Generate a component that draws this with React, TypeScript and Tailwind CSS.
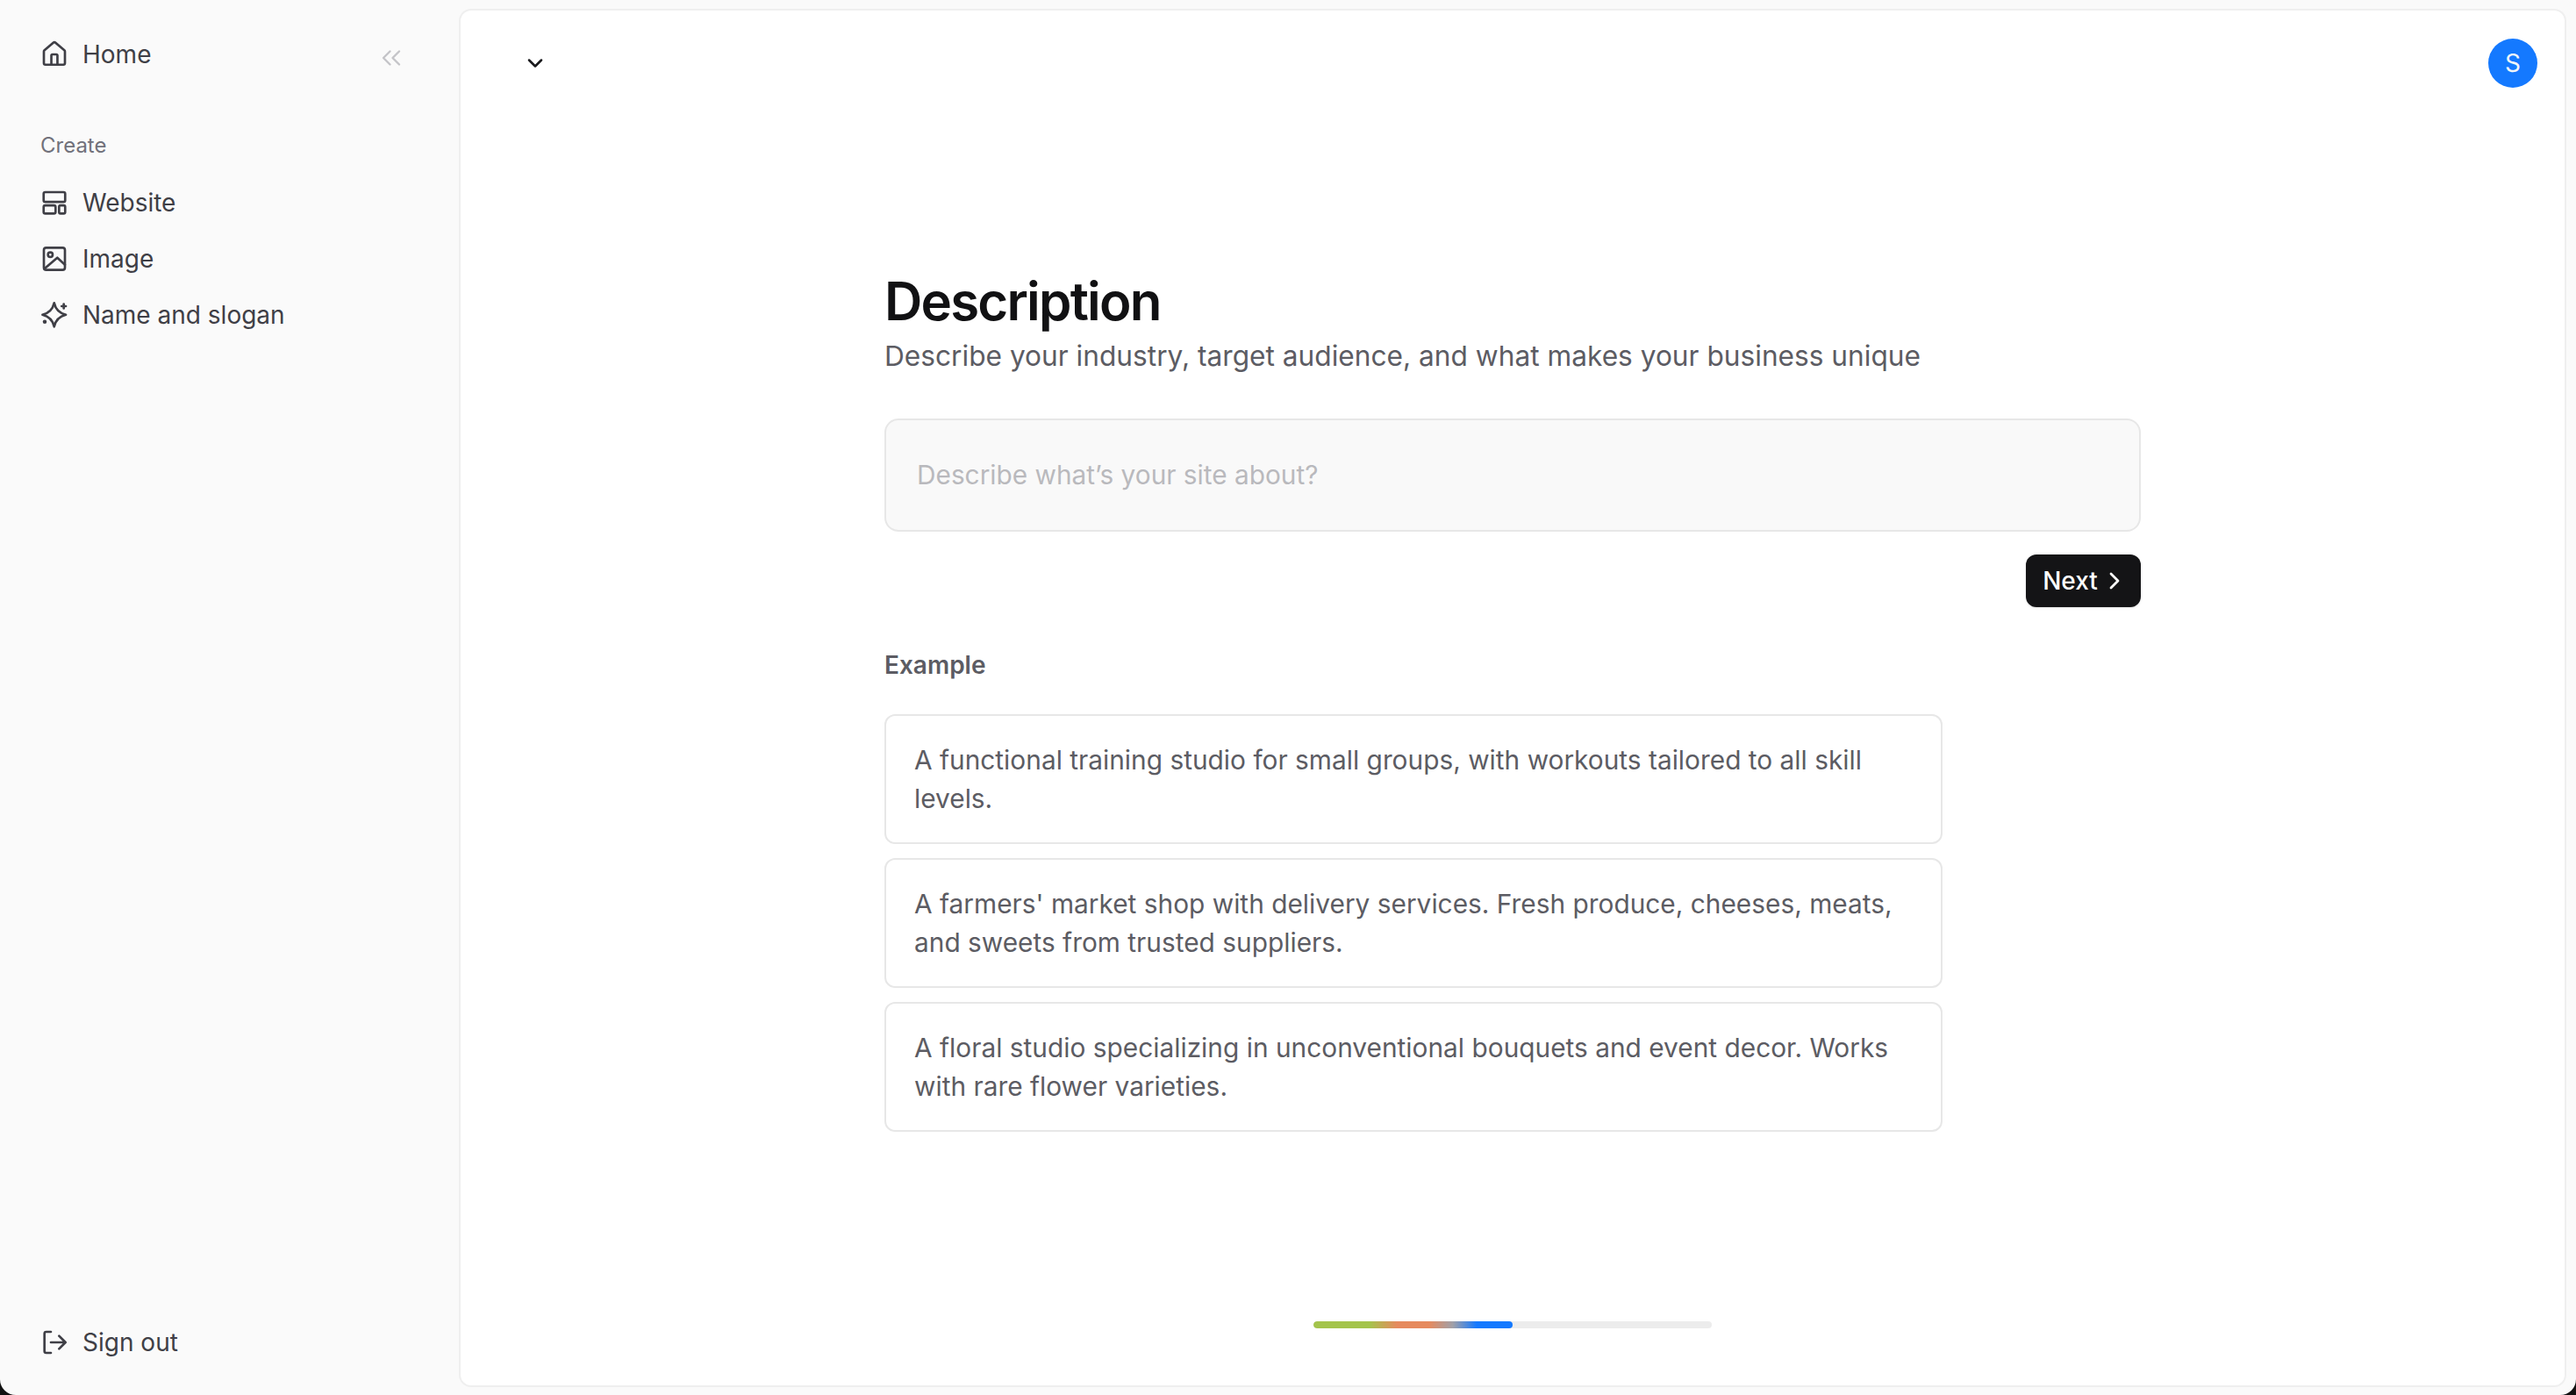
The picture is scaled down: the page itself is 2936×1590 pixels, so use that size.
import { ChevronDown, ChevronRight, ChevronsLeft } from "lucide-react";
import type { ReactNode } from "react";

const iconProps = {
  width: 32,
  height: 32,
  viewBox: "0 0 24 24",
  fill: "none",
  stroke: "currentColor",
  strokeWidth: 2,
  strokeLinecap: "round" as const,
  strokeLinejoin: "round" as const,
};

const HomeIcon = () => (
  <svg {...iconProps}>
    <path d="M3 19.5V9.6a1.5 1.5 0 0 1 .5-1.1L11 2a1.5 1.5 0 0 1 2 0l7.5 6.5a1.5 1.5 0 0 1 .5 1.1v9.9a1.3 1.3 0 0 1-1.3 1.3H4.3A1.3 1.3 0 0 1 3 19.5z" />
    <path d="M9.4 20.8V13a1 1 0 0 1 1-1h3.2a1 1 0 0 1 1 1v7.8" />
  </svg>
);

const WebsiteIcon = () => (
  <svg {...iconProps}>
    <rect x="2.8" y="3" width="18.4" height="8.3" rx="1.4" />
    <rect x="2.8" y="14.3" width="10.2" height="7" rx="1.4" />
    <rect x="16" y="14.3" width="5.2" height="7" rx="1.2" />
  </svg>
);

const ImageIcon = () => (
  <svg {...iconProps}>
    <rect x="3" y="2.5" width="18" height="19" rx="2" />
    <circle cx="8.5" cy="8.5" r="2" />
    <path d="M3.5 20.5 14.5 11l6.5 6" />
  </svg>
);

const SparkleIcon = () => (
  <svg {...iconProps}>
    <path d="M11.8 1.7C13 7.2 16 10.4 21.8 11.8 16 13.2 13 16.4 11.8 22 10.6 16.4 7.6 13.2 1.8 11.8 7.6 10.4 10.6 7.2 11.8 1.7z" />
    <path d="M20 2.7v3.6M18.2 4.5h3.6" />
    <circle cx="3.75" cy="17.8" r="1.7" fill="currentColor" stroke="none" />
  </svg>
);

const SignOutIcon = () => (
  <svg {...iconProps}>
    <path d="M9 3H5a1.5 1.5 0 0 0-1.5 1.5v15A1.5 1.5 0 0 0 5 21h4" />
    <path d="M9 12h12M16 6.5l5.5 5.5-5.5 5.5" />
  </svg>
);

function NavItem({ icon, label }: { icon: ReactNode; label: string }) {
  return (
    <div className="flex h-[64px] items-center gap-[16px] pl-[46px] text-[28px] leading-[40px] text-[#3f3f46]">
      {icon}
      <span>{label}</span>
    </div>
  );
}

const examples = [
  "A functional training studio for small groups, with workouts tailored to all skill levels.",
  "A farmers' market shop with delivery services. Fresh produce, cheeses, meats, and sweets from trusted suppliers.",
  "A floral studio specializing in unconventional bouquets and event decor. Works with rare flower varieties.",
];

export default function App() {
  return (
    <div className="h-[1590px] w-[2936px] overflow-hidden bg-[#111111]">
      <div className="flex h-full w-full overflow-hidden rounded-b-[18px] bg-[#fafafa] font-['Inter',sans-serif]">
        <aside className="flex w-[523px] shrink-0 flex-col pt-[30px] pb-[28px]">
          <div className="relative">
            <NavItem icon={<HomeIcon />} label="Home" />
            <ChevronsLeft
              className="absolute top-[18px] left-[428px] text-[#c4c4c8]"
              size={36}
              strokeWidth={1.6}
            />
          </div>
          <div className="mt-[56px] pl-[46px] text-[24px] leading-[32px] text-[#71717a]">Create</div>
          <div className="mt-[17px] flex flex-col">
            <NavItem icon={<WebsiteIcon />} label="Website" />
            <NavItem icon={<ImageIcon />} label="Image" />
            <NavItem icon={<SparkleIcon />} label="Name and slogan" />
          </div>
          <div className="mt-auto">
            <NavItem icon={<SignOutIcon />} label="Sign out" />
          </div>
        </aside>

        <main className="mt-[10px] mr-[11px] mb-[9px] flex min-w-0 flex-1 flex-col rounded-[14px] border-2 border-[#efefef] bg-white">
          <div className="flex h-[106px] items-start justify-between pt-[44px] pr-[31px] pl-[71px]">
            <ChevronDown className="mt-[2px] text-[#18181b]" size={28} strokeWidth={2.2} />
            <div className="-mt-[12px] flex h-[56px] w-[56px] items-center justify-center rounded-full bg-[#1479ff] text-[28px] text-[#f1f5f9]">
              S
            </div>
          </div>

          <div className="mx-auto flex w-[1432px] flex-1 flex-col pt-[189px]">
            <h1 className="text-[60px] leading-[72px] font-semibold tracking-[-0.03em] text-[#111113]">
              Description
            </h1>
            <p className="mt-[7px] text-[31.66px] leading-[40px] text-[#5c5c63]">
              Describe your industry, target audience, and what makes your business unique
            </p>
            <div className="mt-[51px] flex h-[129px] items-center rounded-[16px] border-2 border-[#e7e7e7] bg-[#f9f9f9] px-[35px] text-[29.8px] text-[#b9b9bd]">
              Describe what’s your site about?
            </div>
            <div className="mt-[26px] flex justify-end">
              <button className="flex h-[60px] w-[131px] items-center justify-center gap-[3px] rounded-[12px] bg-[#141416] pl-[5px] text-[28px] font-medium text-white shadow-sm">
                Next
                <ChevronRight size={32} strokeWidth={2.1} />
              </button>
            </div>
            <div className="mt-[50px] text-[28px] leading-[32px] font-semibold text-[#5c5c63]">Example</div>
            <div className="mt-[40px] flex w-[1206px] flex-col gap-[16px]">
              {examples.map((text) => (
                <div
                  key={text}
                  className="flex h-[148px] items-center rounded-[12px] border-2 border-[#e7e7e7] bg-white pr-[33px] pl-[32px] text-[29.85px] leading-[44px] text-[#5c5c63]"
                >
                  {text}
                </div>
              ))}
            </div>
            <div className="mx-auto mt-auto mb-[65px] h-[8px] w-[454px] overflow-hidden rounded-full bg-[#ececec]">
              <div className="h-full w-1/2 rounded-full bg-[linear-gradient(90deg,#a4c44c_0%,#a4c44c_28%,#e68a5e_42%,#e68a5e_58%,#a0a0a8_70%,#1479ff_82%,#1479ff_100%)]" />
            </div>
          </div>
        </main>
      </div>
    </div>
  );
}
